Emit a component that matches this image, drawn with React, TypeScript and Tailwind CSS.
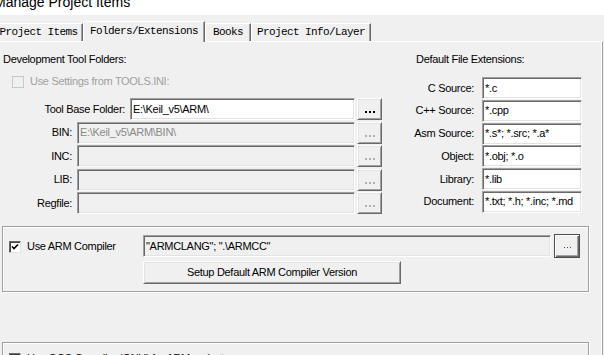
import React from "react";

const sans = "[font-family:'Liberation_Sans',Arial,sans-serif] text-[11px] tracking-[-0.3px] leading-[13px]";

function Field({ w, text, disabled, dimText }: { w: string; text?: string; disabled?: boolean; dimText?: boolean }) {
  return (
    <div
      className={`${w} h-[22px] flex items-center pl-[2px] border border-t-[#a0a0a0] border-l-[#a0a0a0] border-b-white border-r-white shadow-[inset_1px_1px_0_#696969,inset_-1px_-1px_0_#e3e3e3] ${
        disabled ? "bg-[#f0f0f0]" : "bg-white"
      } ${dimText ? "text-[#8a8a8a]" : "text-black"} overflow-hidden whitespace-nowrap`}
    >
      {text}
    </div>
  );
}

function Btn({ w, h, children, disabled, def }: { w: string; h: string; children: React.ReactNode; disabled?: boolean; def?: boolean }) {
  return (
    <div
      className={`${w} ${h} flex items-center justify-center bg-[#f0f0f0] ${
        def
          ? "border border-[#4d4d4d] shadow-[inset_1px_1px_0_#fff,inset_-1px_-1px_0_#696969,inset_-2px_-2px_0_#a0a0a0]"
          : "border border-t-white border-l-white border-b-[#696969] border-r-[#696969] shadow-[inset_1px_1px_0_#e3e3e3,inset_-1px_-1px_0_#a0a0a0]"
      } ${disabled ? "text-[#a0a0a0]" : "text-black"}`}
    >
      {children}
    </div>
  );
}

function Dots({ disabled, small }: { disabled?: boolean; small?: boolean }) {
  const c = disabled ? "bg-[#b0b0b0]" : small ? "bg-[#5a3a6a]" : "bg-black";
  const s = small ? "w-[1px] h-[1px]" : "w-[2px] h-[2px]";
  return (
    <div className={`flex gap-[2px] ${small ? "mt-[2px]" : "mt-[6px]"}`}>
      <div className={`${s} ${c}`} />
      <div className={`${s} ${c}`} />
      <div className={`${s} ${c}`} />
    </div>
  );
}

function Check({ checked, disabled }: { checked?: boolean; disabled?: boolean }) {
  return (
    <div
      className={`w-[12px] h-[12px] flex items-center justify-center border ${
        disabled
          ? "border-[#c8c8c8] bg-[#f0f0f0]"
          : "border-t-[#696969] border-l-[#696969] border-b-[#e3e3e3] border-r-[#e3e3e3] bg-white shadow-[inset_1px_1px_0_#404040]"
      }`}
    >
      {checked && (
        <svg width="8" height="8" viewBox="0 0 8 8">
          <path d="M1 3.5 L3 5.5 L7 1.5" stroke="#000" strokeWidth="1.6" fill="none" />
        </svg>
      )}
    </div>
  );
}

function FolderRow({ label, text, base }: { label: string; text?: string; base?: boolean }) {
  return (
    <div className="flex items-center h-[22px]">
      <div className={`${base ? "w-[130px]" : "w-[77px]"} text-right pr-[5px]`}>{label}</div>
      <Field w={base ? "w-[225px]" : "w-[278px]"} text={text} disabled={!base} dimText={!base} />
      <div className="ml-[2px]">
        <Btn w="w-[25px]" h="h-[22px]" disabled={!base}>
          <Dots disabled={!base} />
        </Btn>
      </div>
    </div>
  );
}

function ExtRow({ label, text }: { label: string; text: string }) {
  return (
    <div className="flex items-center h-[22px]">
      <div className="w-[75px] text-right pr-[1px]">{label}</div>
      <div className="ml-[7px]">
        <Field w="w-[100px]" text={text} />
      </div>
    </div>
  );
}

function Tab({ label, w, selected, cls }: { label: string; w: string; selected?: boolean; cls?: string }) {
  return (
    <div
      className={`${w} ${selected ? "h-[21px] pb-[2px] relative top-[1px] z-10" : "h-[18px]"} ${cls ?? ""} flex items-center justify-center bg-[#f0f0f0] border-t border-l border-r border-t-white border-l-white border-r-[#696969] shadow-[inset_-1px_0_0_#a0a0a0] [font-family:'Liberation_Mono',monospace] text-[11px] tracking-[-0.6px] text-black whitespace-nowrap`}
    >
      {label}
    </div>
  );
}

export default function App() {
  return (
    <div className={`w-[604px] h-[355px] bg-[#f0f0f0] overflow-hidden text-black ${sans}`}>
      {/* title bar */}
      <div className="h-[15px] bg-white overflow-hidden">
        <div className="ml-[-6px] mt-[-6px] [font-family:'Liberation_Sans',Arial,sans-serif] text-[14px] leading-[16px] tracking-normal whitespace-nowrap">
          Manage Project Items
        </div>
      </div>
      {/* tabs */}
      <div className="h-[26px] flex items-end">
        <Tab label="Project Items" w="w-[89px]" cls="ml-[-6px]" />
        <Tab label="Folders/Extensions" w="w-[122px]" selected />
        <Tab label="Books" w="w-[46px]" />
        <Tab label="Project Info/Layer" w="w-[120px]" />
      </div>
      {/* panel */}
      <div className="w-[603px] h-[320px] border-t border-t-white border-r border-r-[#a0a0a0] shadow-[inset_-1px_0_0_#fff]">
        <div className="flex">
          {/* left column */}
          <div className="w-[400px] flex flex-col">
            <div className="ml-[3px] mt-[11px] h-[13px]">Development Tool Folders:</div>
            <div className="flex items-center ml-[12px] mt-[9px] h-[13px] gap-[6px] text-[#a0a0a0]">
              <Check disabled />
              <span>Use Settings from TOOLS.INI:</span>
            </div>
            <div className="mt-[10px] flex flex-col gap-[1.5px]">
              <FolderRow label="Tool Base Folder:" text="E:\Keil_v5\ARM\" base />
              <FolderRow label="BIN:" text="E:\Keil_v5\ARM\BIN\" />
              <FolderRow label="INC:" />
              <FolderRow label="LIB:" />
              <FolderRow label="Regfile:" />
            </div>
          </div>
          {/* right column */}
          <div className="flex flex-col">
            <div className="ml-[16px] mt-[11px] h-[13px]">Default File Extensions:</div>
            <div className="mt-[11px] flex flex-col gap-[0.8px]">
              <ExtRow label="C Source:" text="*.c" />
              <ExtRow label="C++ Source:" text="*.cpp" />
              <ExtRow label="Asm Source:" text="*.s*; *.src; *.a*" />
              <ExtRow label="Object:" text="*.obj; *.o" />
              <ExtRow label="Library:" text="*.lib" />
              <ExtRow label="Document:" text="*.txt; *.h; *.inc; *.md" />
            </div>
          </div>
        </div>
        {/* ARM compiler group */}
        <div className="ml-[2px] mt-[12px] w-[587px] h-[66px] border border-[#a0a0a0] shadow-[1px_1px_0_#fff,inset_1px_1px_0_#fff] flex">
          <div className="w-[140px] flex items-start">
            <div className="flex items-center ml-[6px] mt-[13px] gap-[6px]">
              <Check checked />
              <span>Use ARM Compiler</span>
            </div>
          </div>
          <div className="flex flex-col mt-[7px]">
            <div className="flex items-center">
              <Field w="w-[408px]" text={'"ARMCLANG"; ".\\ARMCC"'} disabled />
              <div className="ml-[3px]">
                <Btn w="w-[26px]" h="h-[24px]" def>
                  <Dots small />
                </Btn>
              </div>
            </div>
            <div className="mt-[3px]">
              <Btn w="w-[258px]" h="h-[23px]">
                <span>Setup Default ARM Compiler Version</span>
              </Btn>
            </div>
          </div>
        </div>
        {/* GCC group */}
        <div className="ml-[2px] mt-[50px] w-[587px] h-[40px] border border-[#a0a0a0] shadow-[1px_1px_0_#fff,inset_1px_1px_0_#fff]">
          <div className="flex items-center ml-[6px] mt-[9px] gap-[6px]">
            <Check />
            <span>Use GCC Compiler (GNU) for ARM projects</span>
          </div>
        </div>
      </div>
    </div>
  );
}
